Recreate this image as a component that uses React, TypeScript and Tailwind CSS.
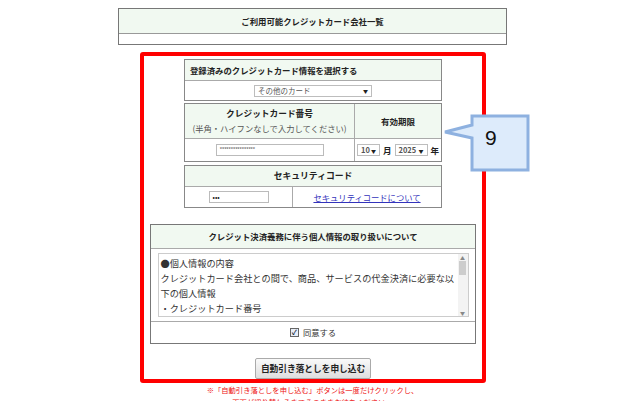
import React from "react";

const JP = { fontFamily: '"Noto Sans CJK JP", "Noto Sans", sans-serif' };

function Sel({ label, w }: { label: string; w: string }) {
  return (
    <div className={`${w} h-[12px] border border-[#bdbdbd] bg-white flex items-center justify-between px-[3px] text-[7.5px] leading-none text-[#555] whitespace-nowrap`}>
      <span>{label}</span>
      <span className="text-[5px] text-[#222]">▼</span>
    </div>
  );
}

export default function App() {
  return (
    <div className="relative w-[641px] h-[401px] overflow-hidden bg-white text-[#222]" style={JP}>
      {/* top table */}
      <div className="ml-[118px] mt-[8px] w-[389px] h-[37px] border border-[#777] flex flex-col">
        <div className="h-[25px] bg-[#f1f9f1] border-b border-[#999] flex items-center justify-center text-[8.4px] font-bold whitespace-nowrap">
          ご利用可能クレジットカード会社一覧
        </div>
        <div className="flex-1 bg-white" />
      </div>

      {/* red frame */}
      <div className="ml-[140px] mt-[7px] w-[346px] h-[331px] border-4 border-[#ff0000] rounded-[3px] flex flex-col items-center pt-[3px]">
        {/* table 1 */}
        <div className="w-[258px] h-[42px] border border-[#888] flex flex-col">
          <div className="h-[21px] bg-[#f1f9f1] border-b border-[#aaa] flex items-center pl-[5px] text-[8.4px] font-bold whitespace-nowrap">
            登録済みのクレジットカード情報を選択する
          </div>
          <div className="flex-1 flex items-center justify-center">
            <Sel label="その他のカード" w="w-[118px]" />
          </div>
        </div>

        {/* table 2 */}
        <div className="mt-[2px] w-[258px] h-[59px] border border-[#888] flex flex-col">
          <div className="h-[35px] flex border-b border-[#aaa] bg-[#f1f9f1]">
            <div className="w-[170px] border-r border-[#aaa] flex flex-col items-center justify-center leading-[14px] whitespace-nowrap">
              <span className="text-[8.7px] font-bold">クレジットカード番号</span>
              <span className="text-[8.3px] text-[#555]">(半角・ハイフンなしで入力してください)</span>
            </div>
            <div className="flex-1 flex items-center justify-center text-[8.5px] font-bold">有効期限</div>
          </div>
          <div className="flex-1 flex bg-white">
            <div className="w-[170px] border-r border-[#aaa] flex items-center justify-center">
              <div className="w-[108px] h-[12px] border border-[#bbb] flex items-center pl-[3px] text-[6px] leading-none text-[#666] tracking-[-0.6px] overflow-hidden">
                ****************
              </div>
            </div>
            <div className="flex-1 flex items-center justify-center gap-[3px] text-[8.5px] font-bold">
              <Sel label="10" w="w-[23px]" />
              <span>月</span>
              <Sel label="2025" w="w-[33px]" />
              <span>年</span>
            </div>
          </div>
        </div>

        {/* table 3 */}
        <div className="mt-[3px] w-[258px] h-[43px] border border-[#888] flex flex-col">
          <div className="h-[21px] bg-[#f1f9f1] border-b border-[#aaa] flex items-center justify-center text-[8.8px] font-bold">
            セキュリティコード
          </div>
          <div className="flex-1 flex bg-white">
            <div className="w-[108px] border-r border-[#aaa] flex items-center justify-center">
              <div className="w-[60px] h-[12px] border border-[#bbb] flex items-center pl-[3px] text-[7px] leading-none">•••</div>
            </div>
            <div className="flex-1 flex items-center justify-center text-[8.3px] text-[#3333bb] underline whitespace-nowrap">
              セキュリティコードについて
            </div>
          </div>
        </div>

        {/* table 4 */}
        <div className="mt-[16px] w-[326px] h-[120px] border border-[#777] flex flex-col">
          <div className="h-[24px] bg-[#f1f9f1] border-b border-[#aaa] flex items-center justify-center text-[8.4px] font-bold whitespace-nowrap">
            クレジット決済義務に伴う個人情報の取り扱いについて
          </div>
          <div className="h-[73px] border-b border-[#aaa] flex items-center justify-center bg-white">
            <div className="w-[311px] h-[64px] border border-[#ccc] flex overflow-hidden">
              <div className="flex-1 pl-[2px] pt-[2px] text-[9.2px] leading-[15px] text-[#333] whitespace-nowrap">
                <div>●個人情報の内容</div>
                <div>クレジットカード会社との間で、商品、サービスの代金決済に必要な以</div>
                <div>下の個人情報</div>
                <div>・クレジットカード番号</div>
              </div>
              <div className="w-[10px] bg-[#f3f3f3] flex flex-col items-center py-[1px] text-[5px] leading-none text-[#888]">
                <span>▲</span>
                <div className="w-[7px] h-[14px] bg-[#cdcdcd] mt-[1px]" />
                <div className="flex-1" />
                <span>▼</span>
              </div>
            </div>
          </div>
          <div className="flex-1 flex items-center justify-center gap-[4px] bg-white text-[8.3px] text-[#333]">
            <div className="w-[9px] h-[9px] border border-[#666] bg-[#e8eef8] flex items-center justify-center text-[7px] leading-none font-bold text-[#123]">✓</div>
            <span>同意する</span>
          </div>
        </div>

        {/* button */}
        <div className="mt-[14px] w-[116px] h-[21px] border border-[#aaa] rounded-[2px] bg-gradient-to-b from-[#fafafa] to-[#dedede] flex items-center justify-center text-[8.7px] font-bold text-[#222] whitespace-nowrap">
          自動引き落としを申し込む
        </div>
      </div>

      {/* notes */}
      <div className="ml-[118px] w-[389px] mt-[1px] flex flex-col items-center text-[7.3px] leading-[12px] text-[#ee1111] whitespace-nowrap">
        <div>※「自動引き落としを申し込む」ボタンは一度だけクリックし、</div>
        <div>画面が切り替わるまでそのままお待ちください。</div>
      </div>

      {/* callout */}
      <div className="absolute left-[440px] top-[113px]">
        <svg width="92" height="62" viewBox="0 0 92 62">
          <path
            d="M32 3 L88 3 L88 57 L32 57 L32 25 L5 19 L32 12 Z"
            fill="#ddebfb"
            stroke="#8eb1e0"
            strokeWidth="3"
            strokeLinejoin="miter"
          />
        </svg>
        <div className="absolute left-[45px] top-[14px] text-[21px] leading-none text-[#111]" style={{ fontFamily: '"Liberation Sans", sans-serif' }}>
          9
        </div>
      </div>
    </div>
  );
}
